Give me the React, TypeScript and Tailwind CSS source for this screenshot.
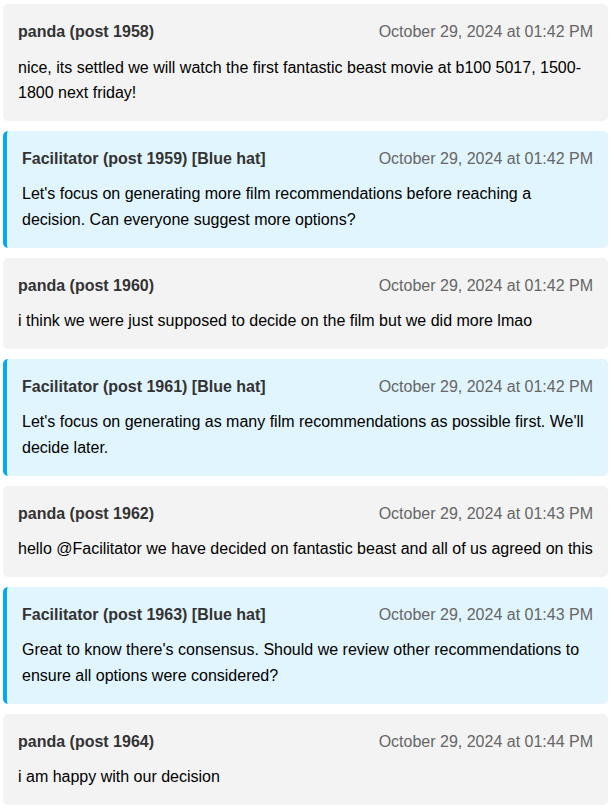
const posts = [
  {
    author: 'panda (post 1958)',
    time: 'October 29, 2024 at 01:42 PM',
    text: 'nice, its settled we will watch the first fantastic beast movie at b100 5017, 1500-1800 next friday!',
    hat: false,
  },
  {
    author: 'Facilitator (post 1959) [Blue hat]',
    time: 'October 29, 2024 at 01:42 PM',
    text: "Let's focus on generating more film recommendations before reaching a decision. Can everyone suggest more options?",
    hat: true,
  },
  {
    author: 'panda (post 1960)',
    time: 'October 29, 2024 at 01:42 PM',
    text: 'i think we were just supposed to decide on the film but we did more lmao',
    hat: false,
  },
  {
    author: 'Facilitator (post 1961) [Blue hat]',
    time: 'October 29, 2024 at 01:42 PM',
    text: "Let's focus on generating as many film recommendations as possible first. We'll decide later.",
    hat: true,
  },
  {
    author: 'panda (post 1962)',
    time: 'October 29, 2024 at 01:43 PM',
    text: 'hello @Facilitator we have decided on fantastic beast and all of us agreed on this',
    hat: false,
  },
  {
    author: 'Facilitator (post 1963) [Blue hat]',
    time: 'October 29, 2024 at 01:43 PM',
    text: "Great to know there's consensus. Should we review other recommendations to ensure all options were considered?",
    hat: true,
  },
  {
    author: 'panda (post 1964)',
    time: 'October 29, 2024 at 01:44 PM',
    text: 'i am happy with our decision',
    hat: false,
  },
];

export default function App() {
  return (
    <div className="bg-white pl-[3px] pr-[6px] pt-[4px] font-['Liberation_Sans',Arial,sans-serif] text-[16px] leading-[1.6]">
      <div className="flex flex-col gap-[10px]">
        {posts.map((p) => (
          <div
            key={p.author}
            className={
              p.hat
                ? 'rounded-[5px] border-l-4 border-[#03a9f4] bg-[#e1f5fe] px-[15px] py-[15px]'
                : 'rounded-[5px] bg-[#f3f3f3] px-[15px] py-[15px]'
            }
          >
            {/* header */}
            <div className="flex items-center justify-between">
              <span className="font-bold text-[#333]">{p.author}</span>
              <span className="text-[#666]">{p.time}</span>
            </div>
            <p className="mt-[10px] text-black">{p.text}</p>
          </div>
        ))}
      </div>
    </div>
  );
}
